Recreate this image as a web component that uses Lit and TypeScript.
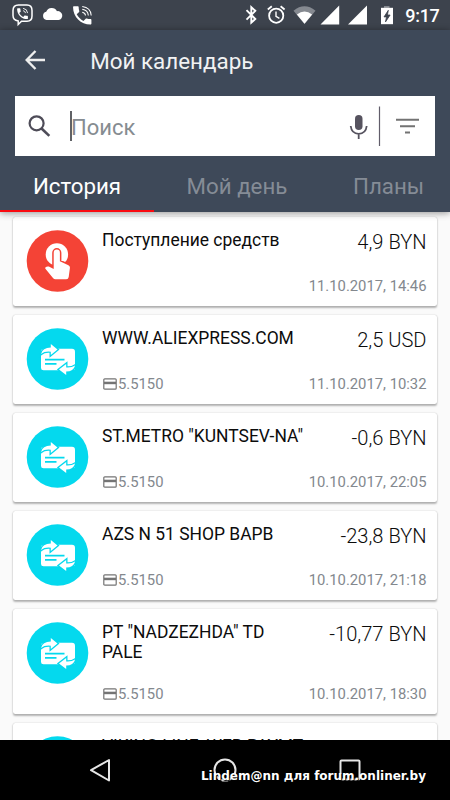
import { LitElement, html, css, svg, nothing } from "lit";
import { customElement, property } from "lit/decorators.js";

interface Operation {
  title: string[];
  amount: string;
  date: string;
  card?: string;
  income?: boolean;
}

const operations: Operation[] = [
  { title: ["Поступление средств"], amount: "4,9 BYN", date: "11.10.2017, 14:46", income: true },
  { title: ["WWW.ALIEXPRESS.COM"], amount: "2,5 USD", date: "11.10.2017, 10:32", card: "5.5150" },
  { title: ['ST.METRO "KUNTSEV-NA"'], amount: "-0,6 BYN", date: "10.10.2017, 22:05", card: "5.5150" },
  { title: ["AZS N 51 SHOP BAPB"], amount: "-23,8 BYN", date: "10.10.2017, 21:18", card: "5.5150" },
  { title: ['PT "NADZEZHDA" TD', "PALE"], amount: "-10,77 BYN", date: "10.10.2017, 18:30", card: "5.5150" },
  { title: ["VIKING LINE, WEB PAYMT"], amount: "", date: "" },
];

const handset =
  "M6.6 10.8c1.4 2.8 3.8 5.1 6.6 6.6l2.2-2.2c.3-.3.7-.4 1-.2 1.100.4 2.300.6 3.600.6.6 0 1 .4 1 1V20c0 .6-.4 1-1 1C10.600 21 3 13.400 3 4c0-.6.4-1 1-1h3.500c.6 0 1 .4 1 1 0 1.300.2 2.500.6 3.600.1.400 0 .8-.2 1z";

@customElement("status-bar")
export class StatusBar extends LitElement {
  static styles = css`
    :host {
      display: grid;
      grid-template-columns: 100px 1fr 205px;
      height: 30px;
      background: #3d434d;
    }
    svg { display: block; }
    .right { grid-column: 3; }
    text { font: 500 18px Roboto, sans-serif; fill: #fff; }
  `;

  render() {
    return html`
      <svg width="100" height="30" viewBox="0 0 100 30">
        <path d="M18.500 5h8.500q5 0 5 5.500v5.500q0 5.200-5 5.200h-5.500l-3.300 3.300v-3.600q-5.200-.8-5.200-5.400v-5q0-5.500 5.500-5.500z" fill="none" stroke="#fff" stroke-width="1.500" />
        <g transform="translate(15.300 6.500) scale(.6)"><path d=${handset} fill="#fff" /><path d="M13 3q7 1 7.500 8M13 7q3.500.5 4 4" fill="none" stroke="#fff" stroke-width="1.500" /></g>
        <path d="M46.500 20a4.200 4.200 0 0 1-.3-8.200 6 6 0 0 1 10.800-.6 4.300 4.300 0 0 1 1.600 8.800z" fill="#fff" />
        <g transform="translate(70 3.200) scale(1.020)"><path d=${handset} fill="#fff" /><path d="M12 3.200q8.300 1 8.800 8.800M12 6q5.500.8 6 6M12 8.800q3 .5 3.200 3.200" fill="none" stroke="#fff" stroke-width="1" /></g>
      </svg>
      <svg class="right" width="205" height="30" viewBox="245 0 205 30">
        <path d="M246.500 10.200l8.800 8.800-4 3.600V7.200l4 3.600-8.800 8.800" fill="none" stroke="#fff" stroke-width="1.900" />
        <g fill="none" stroke="#fff"><circle cx="276.200" cy="15.700" r="7.100" stroke-width="1.800" /><path d="M267.800 9.500l4-3.200M284.600 9.500l-4-3.200" stroke-width="1.800" /><path d="M276 11.500v4.800l3.400 2.100" stroke-width="1.400" /></g>
        <path d="M293.500 10.700Q304.500 2 315.500 10.700L304.500 24z" fill="#858990" />
        <path d="M296.900 14.500Q304.500 8.300 312.100 14.500L304.500 23.800z" fill="#fff" />
        <path d="M339.200 5.500v19H320.500zM367 5.500v19H348z" fill="#fff" />
        <path d="M384 6h5.500v3H384z" fill="#858990" /><path d="M381 7.800h12v16.400h-12z" fill="#fff" />
        <path d="M388.300 10.300l-4.300 6.600h2.500l-1 5 4.600-6.900h-2.700z" fill="#3d434d" stroke="#3d434d" stroke-width=".8" />
        <text x="405.300" y="21.800" textLength="34.500">9:17</text>
      </svg>
    `;
  }
}

@customElement("operation-card")
export class OperationCard extends LitElement {
  @property({ attribute: false }) data!: Operation;

  static styles = css`
    :host {
      display: flex;
      box-sizing: border-box;
      min-height: 89px;
      padding: 13px 10.500px 0 13px;
      border-radius: 2.500px;
      background: #fff;
      box-shadow: 0 1.500px 2px rgba(0, 0, 0, 0.28), 0 0 1.500px rgba(0, 0, 0, 0.18);
      font-family: Roboto, "Noto Sans", sans-serif;
    }
    .icon { flex: none; width: 62px; height: 62px; overflow: visible; }
    .body { flex: 1; margin-left: 14px; display: flex; flex-direction: column; }
    .row { display: flex; justify-content: space-between; white-space: nowrap; }
    .title { font-size: 17.450px; line-height: 20px; color: #0c0c0c; }
    .amount { font-size: 20.100px; line-height: 24px; font-weight: 300; color: #0c0c0c; }
    .foot { margin-top: auto; margin-bottom: 11px; height: 18px; line-height: 18px; font-size: 14.800px; color: #83888e; }
    .card { display: flex; align-items: center; gap: 1px; margin-left: 1px; }
    .card svg { margin-top: -1px; }
  `;

  render() {
    const { title, amount, date, card, income } = this.data;
    return html`
      <svg class="icon" viewBox="-0.500 0 62 62">
        <circle cx="31" cy="31" r="30.800" fill=${income ? "#f44336" : "#04d9ee"} />
        ${income
          ? svg`<circle cx="30.400" cy="24.400" r="11.200" fill="#fff" />
              <path d="M27.200 22.700a3.100 3.100 0 0 1 6.200 0v8.500l8.500 4.100q1.800.9 1.500 2.800l-1.200 8.900q-.3 2.300-2.500 2.300H28.900q-1.300 0-2.200-1l-7.600-9.300q-.8-1 .3-1.900t2.900-.5l4.900 2.500z" fill="#fff" stroke="#f44336" stroke-width="3" paint-order="stroke" />`
          : svg`<path d="M17.500 20.700H45.500q3 0 3 3V40q0 2.200-2.500 2.200H17q-2.500 0-2.500-2.200V24q0-3.300 3-3.300z" fill="#fff" />
              <path d="M18.500 31.600H38M18.500 35.800H30" stroke="#04d9ee" stroke-width="1.700" />
              <path d="M14.500 26Q16 19.500 24.300 19.500V16L31 21.500 24.300 27V23.700Q18 23 14.500 26z" fill="#fff" stroke="#04d9ee" stroke-width="2.600" paint-order="stroke" />
              <path d="M48.600 37.500Q47 43.600 39.700 43.600V47L32.500 41.500 39.700 36V39.500Q45 40 48.600 37.500z" fill="#fff" stroke="#04d9ee" stroke-width="2.600" paint-order="stroke" />`}
      </svg>
      <div class="body">
        <div class="row">
          <div class="title">${title.map((line) => html`<div>${line}</div>`)}</div>
          <div class="amount">${amount}</div>
        </div>
        <div class="row foot">
          <span class="card">${card
            ? html`<svg width="14" height="12" viewBox="0 0 14 12"><path d="M1.800.8h10.400q1 0 1 1v8.400q0 1-1 1H1.800q-1 0-1-1V1.800q0-1 1-1z" fill="none" stroke="#747474" stroke-width="1.200" /><path d="M1 3.700h12v2.500H1z" fill="#747474" /></svg><span>${card}</span>`
            : nothing}</span>
          <span>${date}</span>
        </div>
      </div>
    `;
  }
}

@customElement("app-root")
export class AppRoot extends LitElement {
  static styles = css`
    :host {
      display: flex;
      flex-direction: column;
      width: 450px;
      height: 800px;
      overflow: hidden;
      background: #fafafa;
      font-family: Roboto, "Noto Sans", sans-serif;
    }
    svg { display: block; }
    .header {
      flex: none;
      height: 182px;
      display: flex;
      flex-direction: column;
      background: #3e4959;
      box-shadow: 0 1px 7px rgba(0, 0, 0, 0.42);
      z-index: 1;
    }
    .toolbar { height: 66px; display: flex; box-sizing: border-box; padding: 17px 0 0 24px; }
    .heading { margin: 1px 0 0 44.200px; font-size: 22.400px; line-height: 27px; color: #f1f2f3; }
    .search { flex: none; width: 420px; height: 60px; margin-left: 15px; background: #fff; display: flex; align-items: center; }
    .lens { margin-left: 12px; }
    .caret { width: 2px; height: 30px; margin: -1px 0 0 19px; background: #606266; }
    .hint { flex: 1; font-size: 22px; color: #868c91; margin: 3px 0 0 -1px; }
    .tabs { flex: 1; display: grid; grid-template-columns: 154px 166px 1fr; font-size: 22.300px; color: #858c96; }
    .tab { box-sizing: border-box; padding-top: 16px; line-height: 28px; text-align: center; border-bottom: 2.500px solid transparent; }
    .active { color: #fff; border-color: #fa0a10; }
    .last { text-align: left; padding-left: 33px; }
    .list { flex: 1; min-height: 0; overflow: hidden; display: flex; flex-direction: column; gap: 9px; padding: 5px 13px 0; }
    operation-card { flex: none; }
    .tall { height: 105px; }
    .nav { flex: none; height: 60px; background: #000; position: relative; }
    .watermark {
      position: absolute;
      right: 24px;
      top: 29px;
      font: bold 12px/15px "DejaVu Sans", sans-serif;
      color: #fff;
      white-space: nowrap;
      text-shadow: 1px 1px 1px #000;
    }
  `;

  render() {
    return html`
      <status-bar></status-bar>
      <header class="header">
        <div class="toolbar">
          <svg width="22" height="26" viewBox="0 0 22 26"><path d="M11.500 4L2.700 13l8.800 9M2.500 13H21" fill="none" stroke="#eee" stroke-width="2.400" /></svg>
          <div class="heading">Мой календарь</div>
        </div>
        <div class="search">
          <svg class="lens" width="24" height="24" viewBox="0 0 24 24"><circle cx="9.600" cy="9.300" r="7" fill="none" stroke="#4e4c58" stroke-width="2.200" /><path d="M14.300 14.200l8 7.700" stroke="#4e4c58" stroke-width="2.600" /></svg>
          <div class="caret"></div>
          <div class="hint">Поиск</div>
          <svg width="90" height="60" viewBox="345 96 90 60">
            <rect x="355" y="115" width="7.500" height="15" rx="3.750" fill="#56535f" />
            <path d="M350.700 126q.9 7.800 8 7.800t8-7.800M358.700 134v5" fill="none" stroke="#56535f" stroke-width="1.800" />
            <path d="M379.500 106.500v39.500" stroke="#615d6a" stroke-width="1.200" />
            <path d="M396 119.800h23M400 126.300h15M405 132.500h5" stroke="#737373" stroke-width="1.900" />
          </svg>
        </div>
        <nav class="tabs">
          <div class="tab active">История</div>
          <div class="tab">Мой день</div>
          <div class="tab last">Планы</div>
        </nav>
      </header>
      <main class="list">
        ${operations.map((o) => html`<operation-card class=${o.title.length > 1 ? "tall" : ""} .data=${o}></operation-card>`)}
      </main>
      <footer class="nav">
        <svg width="450" height="60" viewBox="0 740 450 60"><g fill="none" stroke="#e6e6e6" stroke-width="2"><path d="M109 760v20.500L91 770.200z" stroke-linejoin="round" /><circle cx="225" cy="770" r="10.500" /><rect x="340.500" y="760.500" width="19" height="19" rx="1" /></g></svg>
        <div class="watermark">Lindem@nn для forum.onliner.by</div>
      </footer>
    `;
  }
}
